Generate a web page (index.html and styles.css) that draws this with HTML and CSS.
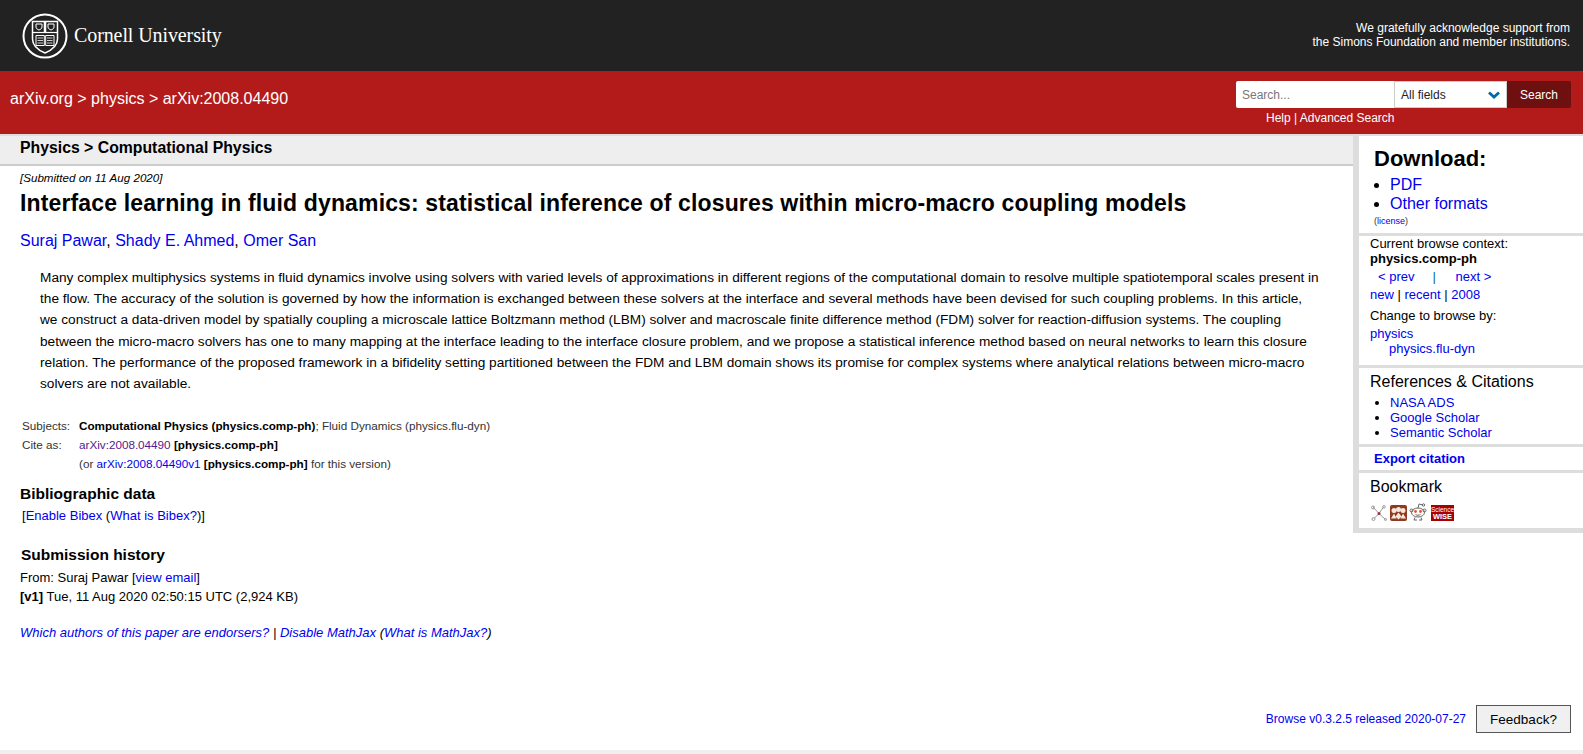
FILE: index.html
```html
<!DOCTYPE html>
<html lang="en">
<head>
    <meta charset="UTF-8">
    <meta name="viewport" content="width=device-width, initial-scale=1.0">
    <title>Interface learning in fluid dynamics</title>
    <link rel="stylesheet" href="styles.css">
</head>
<body>
    <header class="cu-banner">
        <a class="cu-logo" href="#">
            <svg class="cu-seal" width="46" height="46" viewBox="0 0 46 46" fill="none" stroke="#fff">
                <circle cx="23" cy="23" r="21.5" stroke-width="2"/>
                <path d="M10.500 8.500H35.500V26C35.500 33 29 37.500 23 40C17 37.500 10.500 33 10.500 26Z" stroke-width="1.500"/>
                <path d="M10.500 19.500H35.500" stroke-width="1.200"/>
                <path d="M23 8.500V19.500" stroke-width="2.500"/>
                <path d="M14 11H20V14C20 15.500 18.500 16.500 17 17C15.500 16.500 14 15.500 14 14Z" stroke-width="1"/>
                <path d="M26 11H32V14C32 15.500 30.500 16.500 29 17C27.500 16.500 26 15.500 26 14Z" stroke-width="1"/>
                <path d="M14 22.500H22.300V32.500H14ZM23.700 22.500H32V32.500H23.700Z" stroke-width="1"/>
                <path d="M15.500 25H21M15.500 27.500H21M15.500 30H21M25 25H30.500M25 27.500H30.500M25 30H30.500" stroke-width=".8"/>
            </svg>
            <span class="cu-name">Cornell University</span>
        </a>
        <p class="support">We gratefully acknowledge support from<br>the Simons Foundation and member institutions.</p>
    </header>

    <div class="red-bar">
        <div class="breadcrumbs">
            <a href="#">arXiv.org</a> &gt; <a href="#">physics</a> &gt; <a href="#">arXiv:2008.04490</a>
        </div>
        <div class="search-block">
            <form class="search-form">
                <input class="search-input" type="text" placeholder="Search...">
                <div class="search-select">
                    <span>All fields</span>
                    <svg width="12" height="8" viewBox="0 0 12 8" fill="none" stroke="#0068ac" stroke-width="2.800"><path d="M1 1.500L6 6L11 1.500"/></svg>
                </div>
                <button class="search-btn" type="button">Search</button>
            </form>
            <div class="search-links"><a href="#">Help</a> | <a href="#">Advanced Search</a></div>
        </div>
    </div>

    <div class="layout">
        <main class="content">
            <div class="subheader"><h1>Physics &gt; Computational Physics</h1></div>
            <div class="paper">
                <div class="dateline">[Submitted on 11 Aug 2020]</div>
                <h2 class="title">Interface learning in fluid dynamics: statistical inference of closures within micro-macro coupling models</h2>
                <div class="authors"><a href="#">Suraj Pawar</a>, <a href="#">Shady E. Ahmed</a>, <a href="#">Omer San</a></div>
                <blockquote class="abstract">Many complex multiphysics systems in fluid dynamics involve using solvers with varied levels of approximations in different regions of the computational domain to resolve multiple spatiotemporal scales present in the flow. The accuracy of the solution is governed by how the information is exchanged between these solvers at the interface and several methods have been devised for such coupling problems. In this article, we construct a data-driven model by spatially coupling a microscale lattice Boltzmann method (LBM) solver and macroscale finite difference method (FDM) solver for reaction-diffusion systems. The coupling between the micro-macro solvers has one to many mapping at the interface leading to the interface closure problem, and we propose a statistical inference method based on neural networks to learn this closure relation. The performance of the proposed framework in a bifidelity setting partitioned between the FDM and LBM domain shows its promise for complex systems where analytical relations between micro-macro solvers are not available.</blockquote>
                <table class="metatable">
                    <tr>
                        <td class="label">Subjects:</td>
                        <td><b>Computational Physics (physics.comp-ph)</b>; Fluid Dynamics (physics.flu-dyn)</td>
                    </tr>
                    <tr>
                        <td class="label">Cite as:</td>
                        <td><a class="visited" href="#">arXiv:2008.04490</a> <b>[physics.comp-ph]</b></td>
                    </tr>
                    <tr>
                        <td></td>
                        <td>(or <a href="#">arXiv:2008.04490v1</a> <b>[physics.comp-ph]</b> for this version)</td>
                    </tr>
                </table>
                <h3 class="bib-title">Bibliographic data</h3>
                <div class="bib-links">[<a href="#">Enable Bibex</a> (<a href="#">What is Bibex?</a>)]</div>
                <h3 class="history-title">Submission history</h3>
                <div class="history">
                    From: Suraj Pawar [<a href="#">view email</a>]<br>
                    <b>[v1]</b> Tue, 11 Aug 2020 02:50:15 UTC (2,924 KB)
                </div>
                <div class="endorsers"><a href="#">Which authors of this paper are endorsers?</a> | <a href="#">Disable MathJax</a> (<a href="#">What is MathJax?</a>)</div>
            </div>
        </main>

        <aside class="sidebar">
            <section class="box box-download">
                <h2>Download:</h2>
                <ul>
                    <li><a href="#">PDF</a></li>
                    <li><a href="#">Other formats</a></li>
                </ul>
                <div class="license">(<a href="#">license</a>)</div>
            </section>
            <section class="box box-browse">
                <div>Current browse context:</div>
                <div class="context">physics.comp-ph</div>
                <div class="prevnext"><a href="#">&lt;&nbsp;prev</a><span>|</span><a href="#">next&nbsp;&gt;</a></div>
                <div class="recent"><a href="#">new</a> | <a href="#">recent</a> | <a href="#">2008</a></div>
                <div class="change">Change to browse by:</div>
                <div class="browse-links"><a href="#">physics</a><a class="sub" href="#">physics.flu-dyn</a></div>
            </section>
            <section class="box box-refs">
                <h3>References &amp; Citations</h3>
                <ul>
                    <li><a href="#">NASA ADS</a></li>
                    <li><a href="#">Google Scholar</a></li>
                    <li><a href="#">Semantic Scholar</a></li>
                </ul>
            </section>
            <section class="box box-export"><a href="#">Export citation</a></section>
            <section class="box box-bookmark">
                <h3>Bookmark</h3>
                <div class="bookmarks">
                    <svg class="bm-net" width="16" height="16" viewBox="0 0 16 16" fill="none" stroke="#999" stroke-width="1">
                        <path d="M2 2L8 8.500L14.500 14.500M12.500 2L8 8.500L3 13.500"/>
                        <circle cx="2" cy="2.500" r="1.500"/><circle cx="13" cy="1.800" r="1.300"/>
                        <circle cx="2.500" cy="14" r="1.500"/><circle cx="14.500" cy="14.500" r="1"/>
                        <circle cx="8" cy="8.500" r="1.500" fill="#a03050" stroke="none"/>
                    </svg>
                    <svg class="bm-mendeley" width="17" height="16" viewBox="0 0 17 16">
                        <rect width="17" height="16" rx="2" fill="#8f3a1f"/>
                        <circle cx="4" cy="5.500" r="2.500" fill="#f6e7de"/><circle cx="8.500" cy="4.500" r="2.500" fill="#f6e7de"/><circle cx="13" cy="5.500" r="2.500" fill="#f6e7de"/>
                        <path d="M1 13.500L4 8.500L6.500 13.500ZM5.500 11.500L8.500 7.500L11.500 11.500L8.500 14.500ZM10.500 13.500L13 8.500L16 13.500Z" fill="#f6e7de"/>
                    </svg>
                    <svg class="bm-reddit" width="18" height="19" viewBox="0 0 18 19" fill="none" stroke="#666" stroke-width="1">
                        <ellipse cx="9" cy="10.500" rx="6.500" ry="4.500" fill="#fff"/>
                        <path d="M9 6L10 2L14 3"/>
                        <circle cx="14.500" cy="3" r="1.200"/>
                        <circle cx="2.500" cy="8.500" r="1.500"/><circle cx="15.500" cy="8.500" r="1.500"/>
                        <circle cx="6.500" cy="9.500" r="1.400" fill="#f0502a" stroke="none"/><circle cx="11.500" cy="9.500" r="1.400" fill="#f0502a" stroke="none"/>
                        <path d="M6.500 12.500C8 13.500 10 13.500 11.500 12.500M6 15.500L5 18H8M12 15.500L13 18H10"/>
                    </svg>
                    <span class="sciwise"><span>Science</span><b>WISE</b></span>
                </div>
            </section>
        </aside>
    </div>

    <footer class="page-footer">
        <a href="#">Browse v0.3.2.5 released 2020-07-27</a>
        <button class="feedback" type="button">Feedback?</button>
    </footer>
    <div class="bottom-strip"></div>
</body>
</html>
```

FILE: styles.css
```css
html, body {
    margin: 0;
    padding: 0;
    height: 100%;
}
body {
    display: flex;
    flex-direction: column;
    height: 754px;
    overflow: hidden;
    font-family: 'Liberation Sans', Arial, sans-serif;
    font-size: 14px;
    color: #000;
    background: #fff;
}
a {
    color: #0000ee;
    text-decoration: none;
}

/* top banners */
.cu-banner {
    display: flex;
    justify-content: space-between;
    align-items: center;
    height: 71px;
    padding: 0 13px 0 22px;
    background: #222;
    color: #fff;
}
.cu-logo {
    display: flex;
    align-items: center;
    gap: 6px;
    color: #fff;
}
.cu-name {
    font-family: 'Liberation Serif', serif;
    font-size: 20px;
    letter-spacing: -.1px;
}
.support {
    margin: 0 0 2px;
    font-size: 12px;
    line-height: 14px;
    text-align: right;
}
.red-bar {
    display: flex;
    justify-content: space-between;
    height: 63px;
    padding-left: 10px;
    padding-right: 12px;
    background: #b31b1b;
    color: #fff;
}
.red-bar a {
    color: #fff;
}
.breadcrumbs {
    padding-top: 19px;
    font-size: 16px;
    line-height: 18px;
}
.search-block {
    padding-top: 10px;
}
.search-form {
    display: flex;
    height: 27px;
}
.search-input {
    width: 158px;
    box-sizing: border-box;
    padding: 0 6px;
    border: 0;
    border-radius: 2px 0 0 2px;
    font-family: inherit;
    font-size: 12px;
}
.search-input::placeholder {
    color: #777;
}
.search-select {
    display: flex;
    justify-content: space-between;
    align-items: center;
    box-sizing: border-box;
    width: 113px;
    padding: 0 6px 0 6px;
    border: 1px solid #ccc;
    background: #fff;
    color: #222;
    font-size: 12px;
}
.search-btn {
    width: 64px;
    padding: 1px 0 0;
    border: 0;
    border-radius: 0 2px 2px 0;
    background: #6e1010;
    color: #fff;
    font-family: inherit;
    font-size: 12px;
}
.search-links {
    padding: 3px 0 0 30px;
    font-size: 12px;
    line-height: 14px;
}

/* main layout */
.layout {
    display: flex;
    align-items: flex-start;
    border-top: 2px solid #ddd;
}
.content {
    flex: 1;
    min-width: 0;
}
.subheader {
    height: 28px;
    padding-left: 20px;
    background: #eee;
    border-bottom: 2px solid #ccc;
}
.subheader h1 {
    margin: 0;
    padding-top: 2px;
    font-size: 15.800px;
    line-height: 20px;
}
.paper {
    padding: 5px 32px 0 20px;
}
.dateline {
    font-size: 11.600px;
    font-style: italic;
    line-height: 13px;
}
.title {
    margin: 5px 0 0;
    font-size: 23px;
    line-height: 28px;
    letter-spacing: .14px;
}
.authors {
    margin-top: 14px;
    font-size: 16px;
    line-height: 20px;
}
.abstract {
    margin: 16px 0 0 20px;
    font-size: 13.660px;
    line-height: 21.200px;
}
.metatable {
    margin: 22px 0 0 2px;
    border-collapse: collapse;
    font-size: 11.700px;
    color: #333;
}
.metatable td {
    padding: 0;
    height: 19px;
}
.metatable .label {
    width: 57px;
}
.metatable b {
    color: #000;
}
.metatable .visited {
    color: #551a8b;
}
.bib-title, .history-title {
    margin: 0;
    font-size: 15.500px;
    line-height: 18px;
}
.bib-title {
    margin-top: 12px;
}
.bib-links {
    margin-top: 5px;
    margin-left: 2px;
    font-size: 13px;
    line-height: 16px;
}
.history-title {
    margin-top: 22px;
    margin-left: 1px;
}
.history {
    margin-top: 5px;
    font-size: 13px;
    line-height: 18.500px;
}
.endorsers {
    margin-top: 19px;
    font-size: 13px;
    font-style: italic;
}

/* right hand column */
.sidebar {
    flex: none;
    box-sizing: border-box;
    width: 230px;
    padding: 0 0 5px 6px;
    background: #ddd;
    font-size: 13px;
    line-height: 15px;
    color: #000;
}
.box {
    background: #fff;
    padding: 0 0 0 11px;
    margin-bottom: 3px;
}
.box:last-child {
    margin-bottom: 0;
}
.box ul {
    margin: 0;
    padding: 0 0 0 20px;
}
.box-download {
    height: 97px;
    padding-left: 15px;
}
.box-download h2 {
    margin: 0;
    padding-top: 10px;
    font-size: 22px;
    line-height: 25px;
}
.box-download ul {
    margin-top: 5px;
    padding-left: 16px;
    font-size: 16px;
    line-height: 18.500px;
}
.box-download .license {
    margin-top: 2px;
    font-size: 9px;
    line-height: 12px;
    color: #333;
}
.box-browse {
    height: 129px;
}
.context {
    font-weight: bold;
}
.prevnext {
    display: flex;
    margin-top: 3px;
    padding-left: 8px;
}
.prevnext span {
    width: 3px;
    margin-left: 18px;
    margin-right: 20px;
    color: #0068ac;
}
.recent {
    margin-top: 3px;
}
.change {
    margin-top: 6px;
}
.browse-links {
    margin-top: 3px;
}
.browse-links a {
    display: block;
}
.browse-links .sub {
    padding-left: 19px;
}
.box-refs {
    height: 76px;
}
.box-refs h3, .box-bookmark h3 {
    margin: 0;
    padding-top: 4px;
    font-size: 16px;
    font-weight: normal;
    line-height: 20px;
}
.box-refs ul {
    margin-top: 3px;
}
.box-export {
    height: 23px;
    padding-left: 15px;
    font-weight: bold;
    line-height: 23px;
}
.box-bookmark {
    height: 55px;
}
.bookmarks {
    display: flex;
    align-items: flex-end;
    height: 19px;
    margin-top: 5px;
}
.bm-net {
    margin-left: 1px;
}
.bm-mendeley {
    margin-left: 3px;
}
.bm-reddit {
    margin-left: 2px;
}
.sciwise {
    display: flex;
    flex-direction: column;
    align-items: center;
    justify-content: center;
    width: 23px;
    height: 16px;
    margin-left: 4px;
    background: #a80000;
    color: #fff;
    font-size: 6.500px;
    line-height: 7.500px;
}
.sciwise b {
    font-size: 7.500px;
}

/* footer */
.page-footer {
    display: flex;
    justify-content: flex-end;
    align-items: center;
    gap: 10px;
    margin-top: auto;
    padding: 0 12px 17px 0;
    font-size: 12px;
}
.feedback {
    width: 95px;
    height: 28px;
    padding: 0;
    border: 1px solid #555;
    background: #f0f0f0;
    color: #000;
    font-family: inherit;
    font-size: 13.500px;
}
.bottom-strip {
    height: 4px;
    background: #f0f0f0;
}
```
